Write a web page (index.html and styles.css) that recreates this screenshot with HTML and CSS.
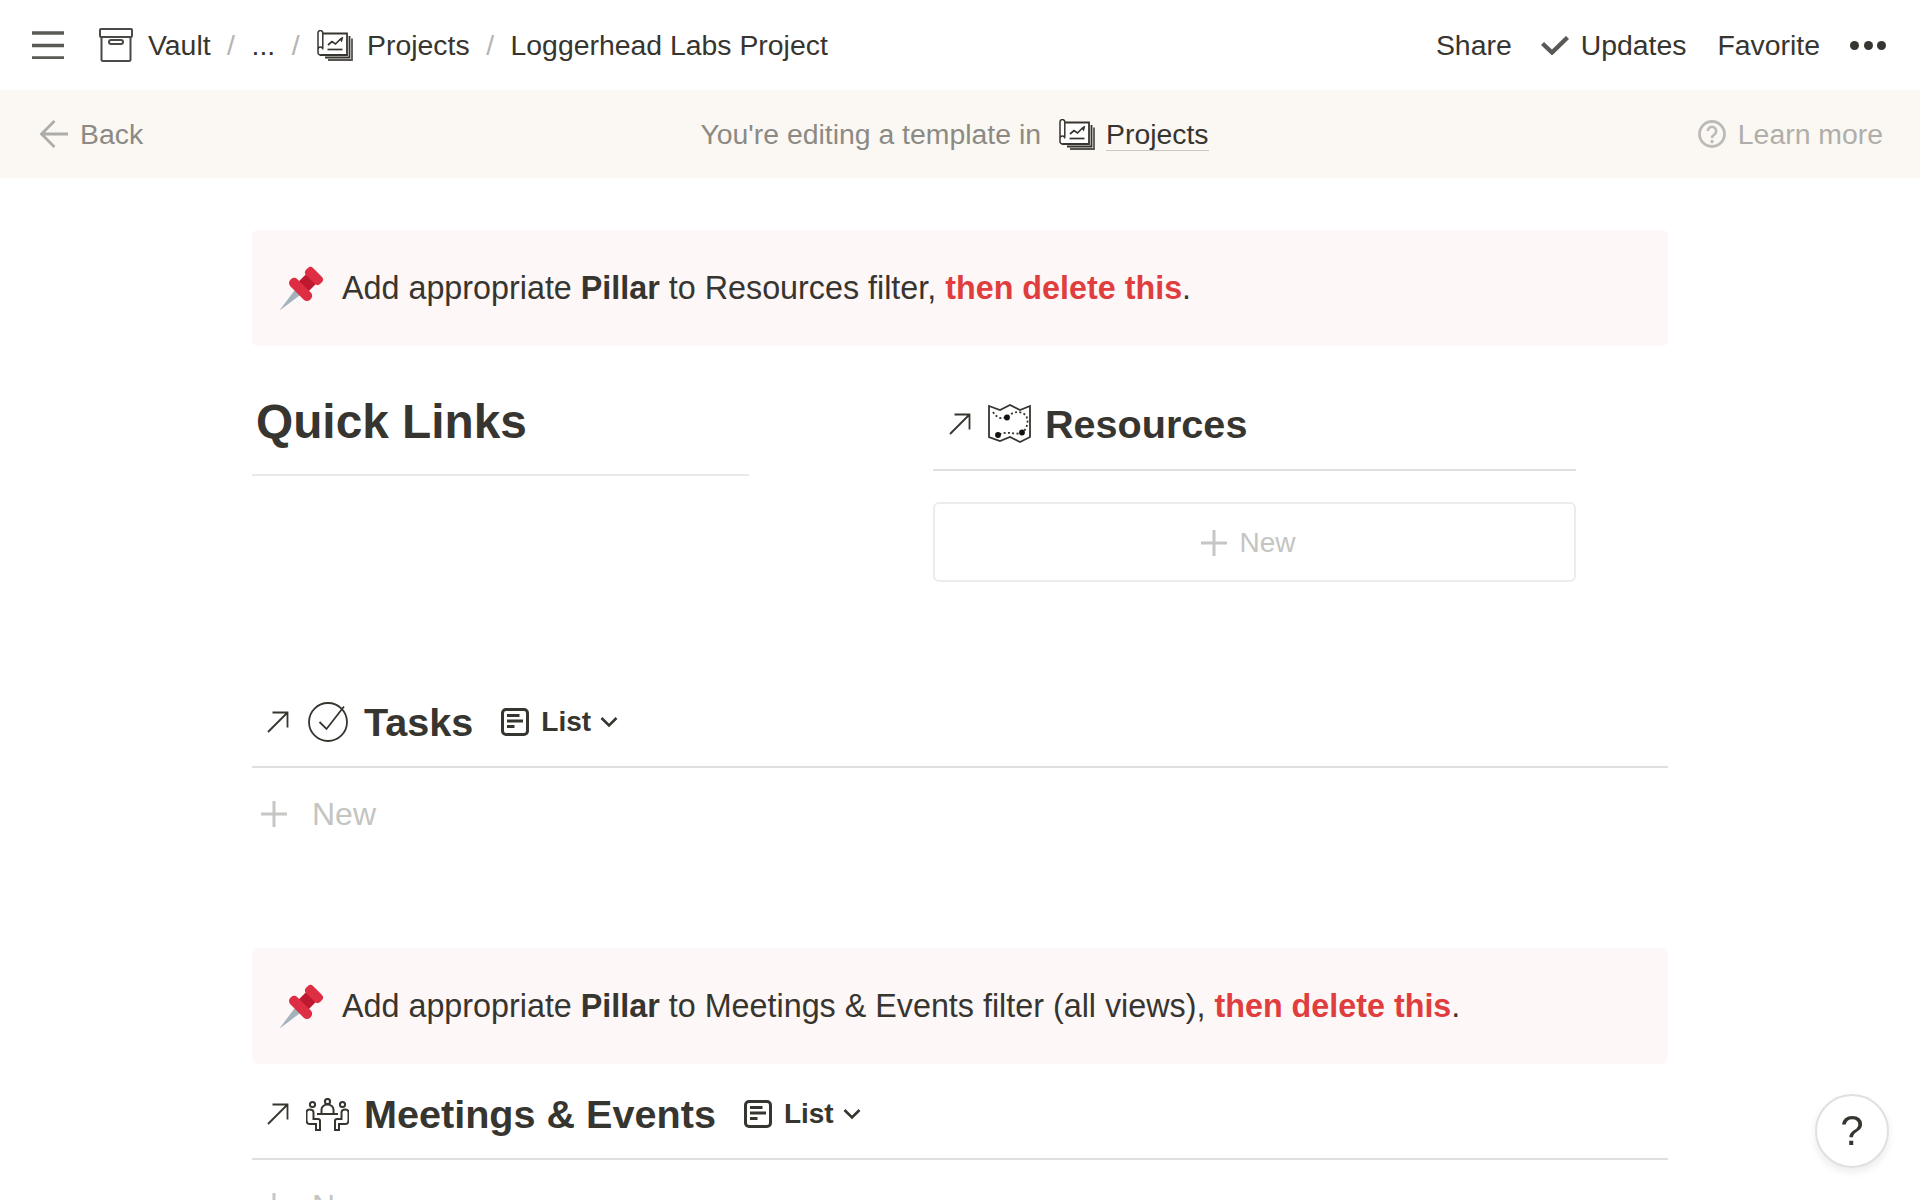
FILE: index.html
```html
<!DOCTYPE html>
<html lang="en">

<head>
    <meta charset="utf-8">
    <meta name="viewport" content="width=device-width, initial-scale=1.0">
    <title>Loggerhead Labs Project</title>

    <link rel="stylesheet" href="styles.css">
</head>

<body>
    <svg class="defs" width="0" height="0">
        <symbol id="i-projects" viewBox="0 0 36 31">
            <path d="M35 8.500V30H11" fill="none" stroke="#55544f" stroke-width="1.800" />
            <path d="M32.500 6v21.500H8" fill="none" stroke="#37352f" stroke-width="1.800" />
            <path d="M5 3.500h25v21.500H3" fill="#fff" stroke="#37352f" stroke-width="1.800" />
            <path d="M1 17V3a2.400 2.400 0 0 1 4.800 0v15M1 17v5.500a2.400 2.400 0 0 0 2.400 2.400M1 19.500a2.400 2.400 0 0 1 4.800 0" fill="#fff" stroke="#37352f" stroke-width="1.500" />
            <path d="M11 15l4-3.500 3.500 2.500 5-5 1 1.500 1-3.500" fill="none" stroke="#37352f" stroke-width="1.700" />
            <path d="M10.500 19.500h15" stroke="#37352f" stroke-width="1.700" />
        </symbol>
        <symbol id="i-arrow" viewBox="0 0 22 22">
            <path d="M1 21L20.500 1.500M5.500 1.500h15v15" fill="none" stroke="#37352f" stroke-width="1.800" />
        </symbol>
        <symbol id="i-list" viewBox="0 0 28 28">
            <rect x="1.500" y="1.500" width="25" height="25" rx="3.500" fill="none" stroke="#37352f" stroke-width="3" />
            <path d="M6 7.500h12.500M6 13h16M6 18.500h7.500" stroke="#37352f" stroke-width="2.800" />
        </symbol>
        <symbol id="i-chevron" viewBox="0 0 18 12">
            <path d="M1.500 2l7.500 7.500L16.500 2" fill="none" stroke="#37352f" stroke-width="2.600" />
        </symbol>
        <symbol id="i-plus" viewBox="0 0 26 26">
            <path d="M13 0v26M0 13h26" stroke="#c6c6c4" stroke-width="3" />
        </symbol>
        <symbol id="i-pin" viewBox="0 0 44 44" overflow="visible">
            <g transform="translate(22 22) rotate(45)">
                <path d="M-3.800 5L3.800 5L0 32.500z" fill="#a3b3bd" />
                <rect x="-7" y="-14" width="14" height="12" fill="#be1931" />
                <rect x="-10" y="-22" width="20" height="10" rx="4" fill="#dd2e44" />
                <rect x="-14" y="-3" width="28" height="10" rx="4.500" fill="#dd2e44" />
            </g>
        </symbol>
    </svg>

    <header class="topbar">
        <div class="crumbs">
            <svg class="burger" width="32" height="28" viewBox="0 0 32 28">
                <path d="M0 2h32M0 14.500h32M0 27h32" stroke="#5a5955" stroke-width="3.400" />
            </svg>
            <svg class="ico-box" width="34" height="34" viewBox="0 0 34 34">
                <rect x="1" y="1" width="32" height="8" rx="1" fill="none" stroke="#4a4945" stroke-width="2" />
                <path d="M2.500 9v22.500a1.500 1.500 0 0 0 1.500 1.500h26a1.500 1.500 0 0 0 1.500-1.500V9" fill="none" stroke="#4a4945" stroke-width="2" />
                <rect x="10" y="12" width="14" height="4" rx="2" fill="none" stroke="#4a4945" stroke-width="2" />
            </svg>
            <span>Vault</span>
            <span class="slash">/</span>
            <span>...</span>
            <span class="slash">/</span>
            <svg class="ico-proj" width="36" height="31">
                <use href="#i-projects" />
            </svg>
            <span>Projects</span>
            <span class="slash">/</span>
            <span>Loggerhead Labs Project</span>
        </div>
        <nav class="acties">
            <span class="share">Share</span>
            <svg class="check" width="28" height="19" viewBox="0 0 28 19">
                <path d="M1.500 7.500l9.500 9L26.500 1.500" fill="none" stroke="#5a5955" stroke-width="4.400" />
            </svg>
            <span class="updates">Updates</span>
            <span class="favorite">Favorite</span>
            <div class="dots"><i></i><i></i><i></i></div>
        </nav>
    </header>

    <div class="banner">
        <div class="back">
            <svg width="28" height="28" viewBox="0 0 28 28">
                <path d="M28 14H2M14.500 1L1.500 14l13 13" fill="none" stroke="#aeaca8" stroke-width="2.800" />
            </svg>
            <span>Back</span>
        </div>
        <div class="midden">
            <span>You're editing a template in</span>
            <svg width="36" height="31">
                <use href="#i-projects" />
            </svg>
            <span class="link">Projects</span>
        </div>
        <div class="learn">
            <svg width="28" height="28" viewBox="0 0 28 28">
                <circle cx="14" cy="14" r="12.500" fill="none" stroke="#bdbbb7" stroke-width="2.800" />
                <path d="M9.800 11a4.200 4.200 0 1 1 6.500 3.500c-1.500 1-2.300 1.800-2.300 3.500" fill="none" stroke="#bdbbb7" stroke-width="2.600" />
                <circle cx="14" cy="21.500" r="1.700" fill="#bdbbb7" />
            </svg>
            <span>Learn more</span>
        </div>
    </div>

    <main class="side">
        <section class="callout">
            <svg class="pin" width="44" height="44">
                <use href="#i-pin" />
            </svg>
            <p>Add appropriate <b>Pillar</b> to Resources filter, <b class="rod">then delete this</b>.</p>
        </section>

        <section class="kolonner">
            <div class="quick">
                <h2>Quick Links</h2>
            </div>
            <div class="resources">
                <div class="res-titel">
                    <svg class="pil" width="22" height="22">
                        <use href="#i-arrow" />
                    </svg>
                    <svg class="ico-map" width="43" height="40" viewBox="0 0 43 40">
                        <path d="M1 2l11 4L22 1l10 5 10-4v31l-10 5-10-5-10 4-11-4z" fill="none" stroke="#37352f" stroke-width="1.800" />
                        <path d="M5 8c2 3 4 5 7 6 3 .5 5-.500 7-1 3-3 7-5 11-5 4 .5 8 2 9 6 1 3 .5 7-1 10-1 2-3 4-5 5-3 1-7 .5-10 0-4-.5-9 0-13 2" fill="none" stroke="#37352f" stroke-width="1.800" stroke-dasharray="2 2.300" />
                        <circle cx="19" cy="13.500" r="2.900" fill="#111" />
                        <circle cx="34" cy="28.500" r="2.900" fill="#111" />
                        <circle cx="10" cy="31" r="2.900" fill="#111" />
                    </svg>
                    <h3>Resources</h3>
                </div>
                <div class="nieuw-kaart">
                    <svg width="26" height="26">
                        <use href="#i-plus" />
                    </svg>
                    <span>New</span>
                </div>
            </div>
        </section>

        <section class="view tasks">
            <div class="view-titel">
                <svg class="pil" width="22" height="22">
                    <use href="#i-arrow" />
                </svg>
                <svg class="ico-check" width="40" height="40" viewBox="0 0 40 40">
                    <circle cx="20" cy="20" r="19" fill="none" stroke="#37352f" stroke-width="1.800" />
                    <path d="M11.500 20l7 7L36 4.500" fill="none" stroke="#37352f" stroke-width="1.800" />
                </svg>
                <h3>Tasks</h3>
                <svg class="ico-list" width="28" height="28">
                    <use href="#i-list" />
                </svg>
                <span class="list-naam">List</span>
                <svg width="18" height="12">
                    <use href="#i-chevron" />
                </svg>
            </div>
            <div class="nieuw-rij">
                <svg width="26" height="26">
                    <use href="#i-plus" />
                </svg>
                <span>New</span>
            </div>
        </section>

        <section class="callout tweede">
            <svg class="pin" width="44" height="44">
                <use href="#i-pin" />
            </svg>
            <p>Add appropriate <b>Pillar</b> to Meetings &amp; Events filter (all views), <b class="rod">then delete this</b>.</p>
        </section>

        <section class="view meetings">
            <div class="view-titel">
                <svg class="pil" width="22" height="22">
                    <use href="#i-arrow" />
                </svg>
                <svg class="ico-people" width="43" height="33" viewBox="0 0 43 33">
                    <g fill="none" stroke="#37352f" stroke-width="2">
                        <circle cx="21.500" cy="3.500" r="2.600" />
                        <path d="M15.500 15v-3.500a6 5 0 0 1 12 0V15" />
                        <path d="M11 16h21" />
                        <circle cx="6.500" cy="6.500" r="2.600" />
                        <circle cx="36.500" cy="6.500" r="2.600" />
                        <path d="M3.500 11.500c-2 0-3 1-3 3v8c0 2 1 3.500 3 3.500h6.500v6h4v-9c0-1.500-1-2-2-2h-4.500v-6.500c0-1.500-.5-3-4-3z" />
                        <path d="M39.500 11.500c2 0 3 1 3 3v8c0 2-1 3.500-3 3.500H33v6h-4v-9c0-1.500 1-2 2-2h4.500v-6.500c0-1.500.5-3 4-3z" />
                    </g>
                </svg>
                <h3>Meetings &amp; Events</h3>
                <svg class="ico-list" width="28" height="28">
                    <use href="#i-list" />
                </svg>
                <span class="list-naam">List</span>
                <svg width="18" height="12">
                    <use href="#i-chevron" />
                </svg>
            </div>
            <div class="nieuw-rij">
                <svg width="26" height="26">
                    <use href="#i-plus" />
                </svg>
                <span>New</span>
            </div>
        </section>
    </main>

    <button class="help">?</button>
</body>

</html>
```

FILE: styles.css
```css
html,
body {
    height: 100%;
    overflow: hidden;
}

body {
    margin: 0;
    background-color: white;
    color: #37352f;
    font-family: "Liberation Sans", Arial, sans-serif;
}

.defs {
    display: block;
    height: 0;
}

svg {
    display: block;
    flex: none;
}

/* topbar */
.topbar {
    display: flex;
    justify-content: space-between;
    align-items: center;
    height: 90px;
    padding: 0 34px 0 32px;
    font-size: 28.4px;
}

.crumbs,
.acties {
    display: flex;
    align-items: center;
}

.burger {
    margin-right: 35px;
}

.ico-box {
    margin-right: 15px;
}

.slash {
    margin: 0 16.5px;
    color: #b5b4b1;
}

.ico-proj {
    margin: 0 14px 0 1px;
}

.share {
    margin-right: 29px;
}

.check {
    margin-right: 12px;
}

.updates {
    margin-right: 31px;
}

.favorite {
    margin-right: 30px;
}

.dots {
    display: flex;
    gap: 4.5px;
}

.dots i {
    width: 9px;
    height: 9px;
    border-radius: 50%;
    background-color: #37352f;
}

/* template banner */
.banner {
    display: grid;
    grid-template-columns: 1fr auto 1fr;
    align-items: center;
    height: 88px;
    padding: 0 37px 0 40px;
    background-color: #fbf8f3;
    font-size: 28.4px;
}

.back {
    display: flex;
    align-items: center;
    gap: 12px;
    color: #8b8a84;
}

.midden {
    display: flex;
    align-items: center;
    margin-right: 14px;
    color: #8b8a84;
}

.midden svg {
    margin: 0 11px 0 18px;
}

.link {
    color: #37352f;
    border-bottom: 1px solid #c9c8c5;
    line-height: 32px;
}

.learn {
    display: flex;
    align-items: center;
    justify-content: flex-end;
    gap: 12px;
    color: #b0aea9;
}

/* page content */
.side {
    padding: 52px 252px 0;
}

.callout {
    display: flex;
    align-items: center;
    gap: 18px;
    height: 116px;
    padding-left: 28px;
    box-sizing: border-box;
    background-color: #fdf7f7;
    border-radius: 6px;
    font-size: 32.3px;
}

.callout p {
    margin: 0;
}

.rod {
    color: #e03e3e;
}

.kolonner {
    display: grid;
    grid-template-columns: 497px 643px;
    column-gap: 184px;
    margin-top: 47px;
}

.quick {
    height: 81px;
    border-bottom: 2px solid #e9e9e7;
}

h2 {
    margin: 0;
    padding-left: 4px;
    font-size: 47.8px;
    line-height: 58px;
    font-weight: bold;
}

h3 {
    margin: 0;
    font-size: 39.6px;
    line-height: 50px;
    font-weight: bold;
}

.pil {
    margin: 0 19px 0 15px;
}

.res-titel {
    display: flex;
    align-items: center;
    height: 62px;
    padding-bottom: 14px;
    border-bottom: 2px solid #dfdfdd;
}

.res-titel .pil {
    margin: 0 17px 0 16px;
}

.view-titel {
    display: flex;
    align-items: center;
    height: 76px;
    padding-bottom: 6px;
    border-bottom: 2px solid #dfdfdd;
}

.ico-map {
    margin-right: 14px;
}

.nieuw-kaart {
    display: flex;
    align-items: center;
    justify-content: center;
    gap: 12px;
    height: 80px;
    margin-top: 31px;
    padding: 2px 12px 0 0;
    box-sizing: border-box;
    border: 2px solid #ececeb;
    border-radius: 6px;
    color: #c4c4c2;
    font-size: 28px;
}

.tasks {
    margin-top: 102px;
}

.ico-check {
    margin-right: 16px;
}

.ico-people {
    margin: 0 15px 0 -2px;
}

.ico-list {
    margin: 0 12px 0 28px;
}

.list-naam {
    margin-right: 9px;
    font-size: 28px;
    font-weight: bold;
}

.nieuw-rij {
    display: flex;
    align-items: center;
    gap: 25px;
    height: 92px;
    padding-left: 9px;
    color: #c4c4c2;
    font-size: 32px;
}

.tweede {
    margin-top: 88px;
}

.meetings {
    margin-top: 12px;
}

.help {
    position: fixed;
    right: 31px;
    bottom: 32px;
    width: 74px;
    height: 74px;
    padding: 0;
    background-color: white;
    border: 2px solid #e0e0de;
    border-radius: 50%;
    box-shadow: 0 4px 8px rgba(15, 15, 15, .08);
    color: #37352f;
    font-family: inherit;
    font-size: 42px;
}
```
